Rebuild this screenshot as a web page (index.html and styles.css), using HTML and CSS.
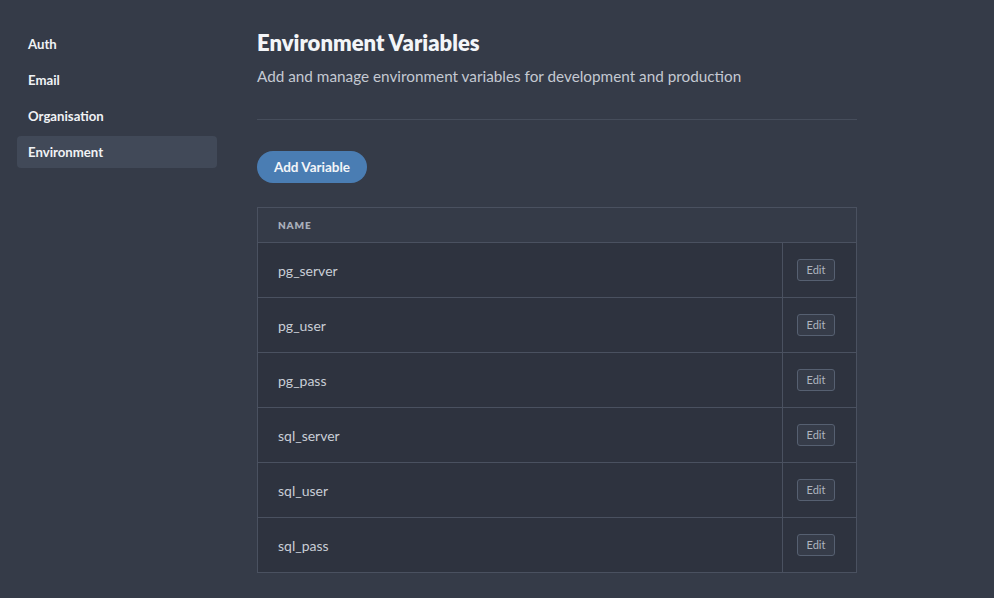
FILE: index.html
```html
<!DOCTYPE html>
<html>
<head>
<meta charset="utf-8">
<link rel="stylesheet" href="styles.css">
</head>
<body>
<div class="layout">
  <nav class="sidebar">
    <a class="nav-item">Auth</a>
    <a class="nav-item">Email</a>
    <a class="nav-item">Organisation</a>
    <a class="nav-item active">Environment</a>
  </nav>
  <main class="main">
    <h1 class="title">Environment Variables</h1>
    <p class="subtitle">Add and manage environment variables for development and production</p>
    <hr class="divider">
    <button class="btn-primary">Add Variable</button>
    <table class="vars">
      <thead>
        <tr><th class="col-name">Name</th><th class="col-action"></th></tr>
      </thead>
      <tbody>
        <tr><td class="col-name">pg_server</td><td class="col-action"><button class="btn-edit">Edit</button></td></tr>
        <tr><td class="col-name">pg_user</td><td class="col-action"><button class="btn-edit">Edit</button></td></tr>
        <tr><td class="col-name">pg_pass</td><td class="col-action"><button class="btn-edit">Edit</button></td></tr>
        <tr><td class="col-name">sql_server</td><td class="col-action"><button class="btn-edit">Edit</button></td></tr>
        <tr><td class="col-name">sql_user</td><td class="col-action"><button class="btn-edit">Edit</button></td></tr>
        <tr><td class="col-name">sql_pass</td><td class="col-action"><button class="btn-edit">Edit</button></td></tr>
      </tbody>
    </table>
  </main>
</div>
</body>
</html>
```
FILE: styles.css
```css
* { box-sizing: border-box; }
html, body {
  margin: 0;
  padding: 0;
  background: #353b48;
  font-family: "Lato", "Noto Sans", sans-serif;
  color: #e8ebf0;
}
.layout {
  display: flex;
  gap: 40px;
  padding: 28px 17px 0 17px;
}
.sidebar {
  width: 200px;
  display: flex;
  flex-direction: column;
  gap: 4px;
  flex-shrink: 0;
}
.nav-item {
  display: block;
  height: 32px;
  line-height: 32px;
  padding: 0 11px;
  font-size: 13.2px;
  font-weight: 700;
  color: #f0f2f5;
  border-radius: 4px;
}
.nav-item.active {
  background: #414958;
}
.main {
  width: 600px;
}
.title {
  margin: 0;
  font-size: 22px;
  font-weight: 800;
  line-height: 29px;
  color: #f3f5f8;
}
.subtitle {
  margin: 9px 0 0 0;
  font-size: 15.3px;
  line-height: 20px;
  color: #c4c9d2;
}
.divider {
  margin: 33px 0 0 0;
  border: 0;
  border-top: 1px solid #464d5b;
}
.btn-primary {
  margin-top: 31px;
  height: 32px;
  width: 110px;
  border: 0;
  border-radius: 16px;
  background: #4a7db3;
  color: #f3f5f8;
  font-family: inherit;
  font-size: 13.5px;
  font-weight: 700;
  display: block;
}
.vars {
  margin-top: 24px;
  width: 600px;
  border-collapse: collapse;
  border: 1px solid #4a5160;
}
.vars th {
  height: 35px;
  text-align: left;
  font-size: 10px;
  font-weight: 800;
  letter-spacing: 0.8px;
  text-transform: uppercase;
  color: #a9afba;
  padding: 0 0 0 20px;
  background: #353b48;
  border-bottom: 1px solid #4a5160;
}
.vars td {
  height: 55px;
  background: #2e333f;
  border-bottom: 1px solid #4a5160;
  font-size: 14px;
  color: #c9ced6;
}
.vars td.col-name {
  padding-left: 20px;
}
.vars td.col-action {
  width: 74px;
  border-left: 1px solid #4a5160;
  padding-left: 14px;
}
.btn-edit {
  width: 38px;
  height: 22px;
  border: 1px solid #566071;
  border-radius: 3px;
  background: #363c49;
  color: #aeb4bf;
  font-family: inherit;
  font-size: 11px;
  padding: 0;
  display: block;
  margin-top: -1px;
}
```
